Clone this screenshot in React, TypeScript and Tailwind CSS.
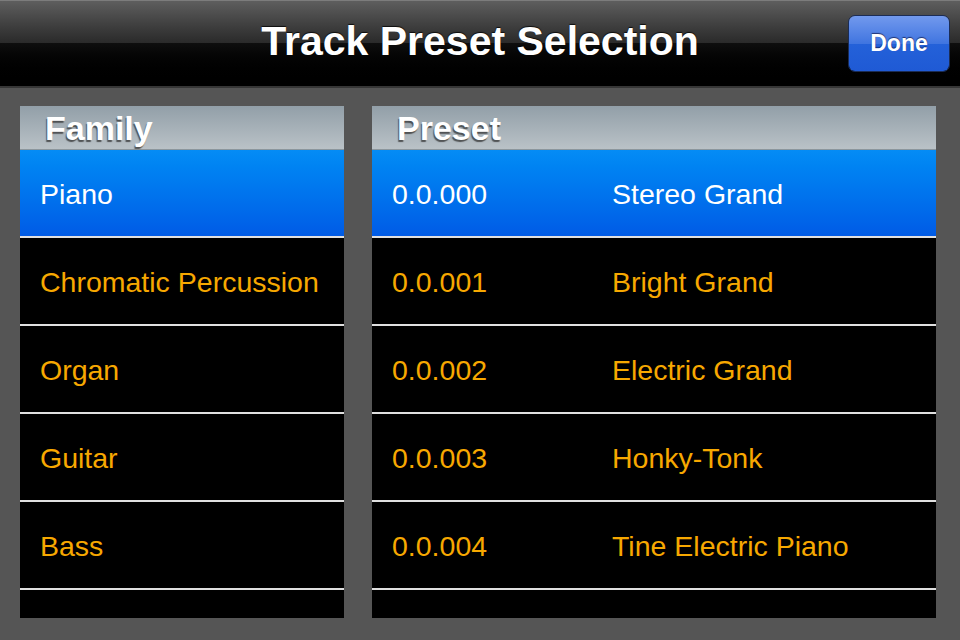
const families = ['Piano', 'Chromatic Percussion', 'Organ', 'Guitar', 'Bass', ''];

const presets = [
  { num: '0.0.000', name: 'Stereo Grand' },
  { num: '0.0.001', name: 'Bright Grand' },
  { num: '0.0.002', name: 'Electric Grand' },
  { num: '0.0.003', name: 'Honky-Tonk' },
  { num: '0.0.004', name: 'Tine Electric Piano' },
  { num: '', name: '' },
];

const font = { fontFamily: '"Liberation Sans", Arial, Helvetica, sans-serif' };

function Header({ label }: { label: string }) {
  return (
    <div className="h-[44px] shrink-0 bg-gradient-to-b from-[#929fa8] to-[#bac2c7] border-b border-[#8c969c] flex items-end">
      <span className="pl-[25px] text-[34px] leading-[41px] font-bold text-white [text-shadow:-1px_2px_1px_rgba(40,40,40,0.7)]">
        {label}
      </span>
    </div>
  );
}

export default function App() {
  return (
    <div className="w-[960px] h-[640px] overflow-hidden bg-[#555555] flex flex-col" style={font}>
      {/* Nav bar */}
      <div className="relative h-[88px] shrink-0 border-b-2 border-[#363636]">
        <div className="h-px bg-[#7c7c7c]" />
        <div className="h-[42px] bg-gradient-to-b from-[#5e5e5e] to-[#2a2a2a]" />
        <div className="h-[43px] bg-gradient-to-b from-[#0e0e0e] to-[#000000]" />
        <div className="absolute inset-0 flex items-center justify-center pb-[2px]">
          <span className="text-[41px] font-bold text-white [text-shadow:0_-1px_1px_rgba(0,0,0,0.8)]">
            Track Preset Selection
          </span>
        </div>
        <button className="absolute left-[848px] top-[15px] w-[102px] h-[57px] rounded-[7px] border border-[#1b2c55] overflow-hidden flex flex-col">
          <div className="h-1/2 w-full bg-gradient-to-b from-[#7299ed] to-[#3f74e0]" />
          <div className="h-1/2 w-full bg-gradient-to-b from-[#2461d9] to-[#1f5ad5]" />
          <span className="absolute inset-0 flex items-center justify-center text-[23px] font-bold text-white [text-shadow:0_-1px_1px_rgba(0,0,40,0.6)]">
            Done
          </span>
        </button>
      </div>

      {/* Lists */}
      <div className="flex gap-[28px] pl-[20px] pt-[18px]">
        <div className="w-[324px] h-[512px] bg-black overflow-hidden flex flex-col">
          <Header label="Family" />
          {families.map((f, i) => (
            <div
              key={i}
              className={`h-[88px] shrink-0 border-b-2 border-[#e0e0e0] flex items-center pl-[20px] pt-[3px] text-[28.5px] ${
                i === 0 ? 'bg-gradient-to-b from-[#058cf5] to-[#015be6] text-white' : 'text-[#f7a800]'
              }`}
            >
              {f}
            </div>
          ))}
        </div>
        <div className="w-[564px] h-[512px] bg-black overflow-hidden flex flex-col">
          <Header label="Preset" />
          {presets.map((p, i) => (
            <div
              key={i}
              className={`h-[88px] shrink-0 border-b-2 border-[#e0e0e0] flex items-center pl-[20px] pt-[3px] text-[28.5px] ${
                i === 0 ? 'bg-gradient-to-b from-[#058cf5] to-[#015be6] text-white' : 'text-[#f7a800]'
              }`}
            >
              <span className="w-[220px]">{p.num}</span>
              <span>{p.name}</span>
            </div>
          ))}
        </div>
      </div>
    </div>
  );
}
